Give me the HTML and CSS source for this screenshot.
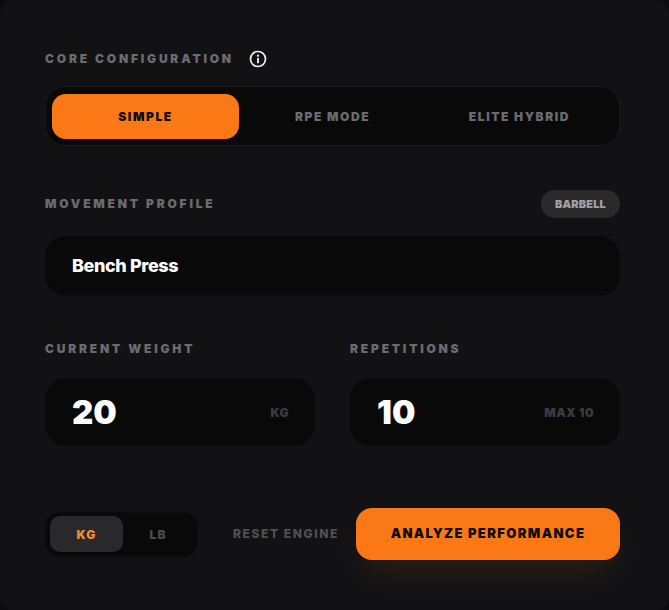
FILE: index.html
```html
<!DOCTYPE html>
<html>
<head>
    <title>Core Configuration</title>
    <link rel="stylesheet" href="styles.css">
</head>
<body>
    <div class="card">
        <div class="label-row core-row">
            <span class="label">CORE CONFIGURATION</span>
            <svg class="info-icon" width="18" height="18" viewBox="0 0 24 24" fill="none" stroke="#ececec" stroke-width="2.3" stroke-linecap="round">
                <circle cx="12" cy="12" r="10"></circle>
                <path d="M12 16.5v-5" stroke-width="2.6"></path>
                <path d="M12 7.6v.1" stroke-width="3"></path>
            </svg>
        </div>

        <div class="segments">
            <button class="segment active">SIMPLE</button>
            <button class="segment">RPE MODE</button>
            <button class="segment">ELITE HYBRID</button>
        </div>

        <div class="label-row profile-row">
            <span class="label">MOVEMENT PROFILE</span>
            <span class="pill">BARBELL</span>
        </div>

        <div class="field profile-field">Bench Press</div>

        <div class="metrics">
            <div class="metric">
                <div class="label metric-label">CURRENT WEIGHT</div>
                <div class="field number-field">
                    <span class="number">20</span>
                    <span class="unit">KG</span>
                </div>
            </div>
            <div class="metric">
                <div class="label metric-label">REPETITIONS</div>
                <div class="field number-field">
                    <span class="number">10</span>
                    <span class="unit">MAX 10</span>
                </div>
            </div>
        </div>

        <div class="footer">
            <div class="unit-toggle">
                <button class="unit-btn active">KG</button>
                <button class="unit-btn">LB</button>
            </div>
            <button class="reset">RESET ENGINE</button>
            <button class="analyze">ANALYZE PERFORMANCE</button>
        </div>
    </div>
</body>
</html>
```

FILE: styles.css
```css
* { box-sizing: border-box; }
html, body { margin: 0; height: 100%; background: #0c0c0e; }
body { font-family: Inter, "Liberation Sans", sans-serif; overflow: hidden; }
button { font-family: inherit; border: none; background: none; padding: 0; cursor: pointer; }
.card { width: 669px; height: 610px; padding: 45px 49px 0 45px; background: #121215; border-radius: 14px; }
.label { font-size: 12px; font-weight: 900; letter-spacing: 2.8px; color: #6b6b70; line-height: 16px; }
.label-row { display: flex; align-items: center; }
.core-row { height: 28px; gap: 15px; }
.info-icon { display: block; }
.segments { display: flex; height: 60px; margin-top: 13px; padding: 7px 6px 6px; background: #09090a; border: 1px solid #19191c; border-radius: 20px; }
.segment { flex: 1; border-radius: 14px; font-size: 12px; font-weight: 900; letter-spacing: 1.6px; color: #6b6b70; }
.segment.active { background: #fb7817; color: #0a0a0a; }
.profile-row { height: 28px; margin-top: 44px; justify-content: space-between; }
.pill { height: 28px; padding: 0 14px; border-radius: 14px; background: #2a2a2d; color: #a0a0a4; font-size: 11px; font-weight: 900; letter-spacing: 0.15px; line-height: 28px; }
.field { background: #09090a; border: 1px solid #0c0c0e; border-radius: 20px; }
.profile-field { height: 60px; margin-top: 18px; padding-left: 26px; font-size: 18px; font-weight: 800; letter-spacing: -0.4px; line-height: 58px; color: #fff; }
.metrics { display: grid; grid-template-columns: 270px 270px; gap: 35px; margin-top: 45px; }
.metric-label { height: 16px; }
.number-field { display: flex; height: 68px; margin-top: 21px; padding: 0 25px; align-items: center; justify-content: space-between; }
.number { margin-left: 1px; font-size: 33px; font-weight: 900; color: #fff; }
.unit { font-size: 12px; font-weight: 900; letter-spacing: 0.5px; color: #3c3c40; }
.footer { display: flex; align-items: center; height: 52px; margin-top: 62px; }
.unit-toggle { display: flex; width: 153px; height: 45px; margin-top: 1px; padding: 3px 4px 4px; background: #09090a; border: 1px solid #0c0c0e; border-radius: 14px; }
.unit-btn { flex: 1; border-radius: 10px; font-size: 12px; font-weight: 900; letter-spacing: 1.2px; color: #4a4a4e; }
.unit-btn.active { flex: none; width: 73px; background: #29292c; color: #f08a3c; }
.reset { width: 105px; margin-left: 35px; padding-bottom: 1px; font-size: 12px; font-weight: 800; letter-spacing: 1.6px; color: #505054; white-space: nowrap; text-align: left; }
.analyze { width: 264px; height: 52px; margin-left: 18px; padding-bottom: 2px; border-radius: 16px; background: #fb7817; color: #0a0a0a; font-size: 13px; font-weight: 900; letter-spacing: 1.4px; box-shadow: 0 18px 32px -8px rgba(251, 120, 23, 0.13); }
```
